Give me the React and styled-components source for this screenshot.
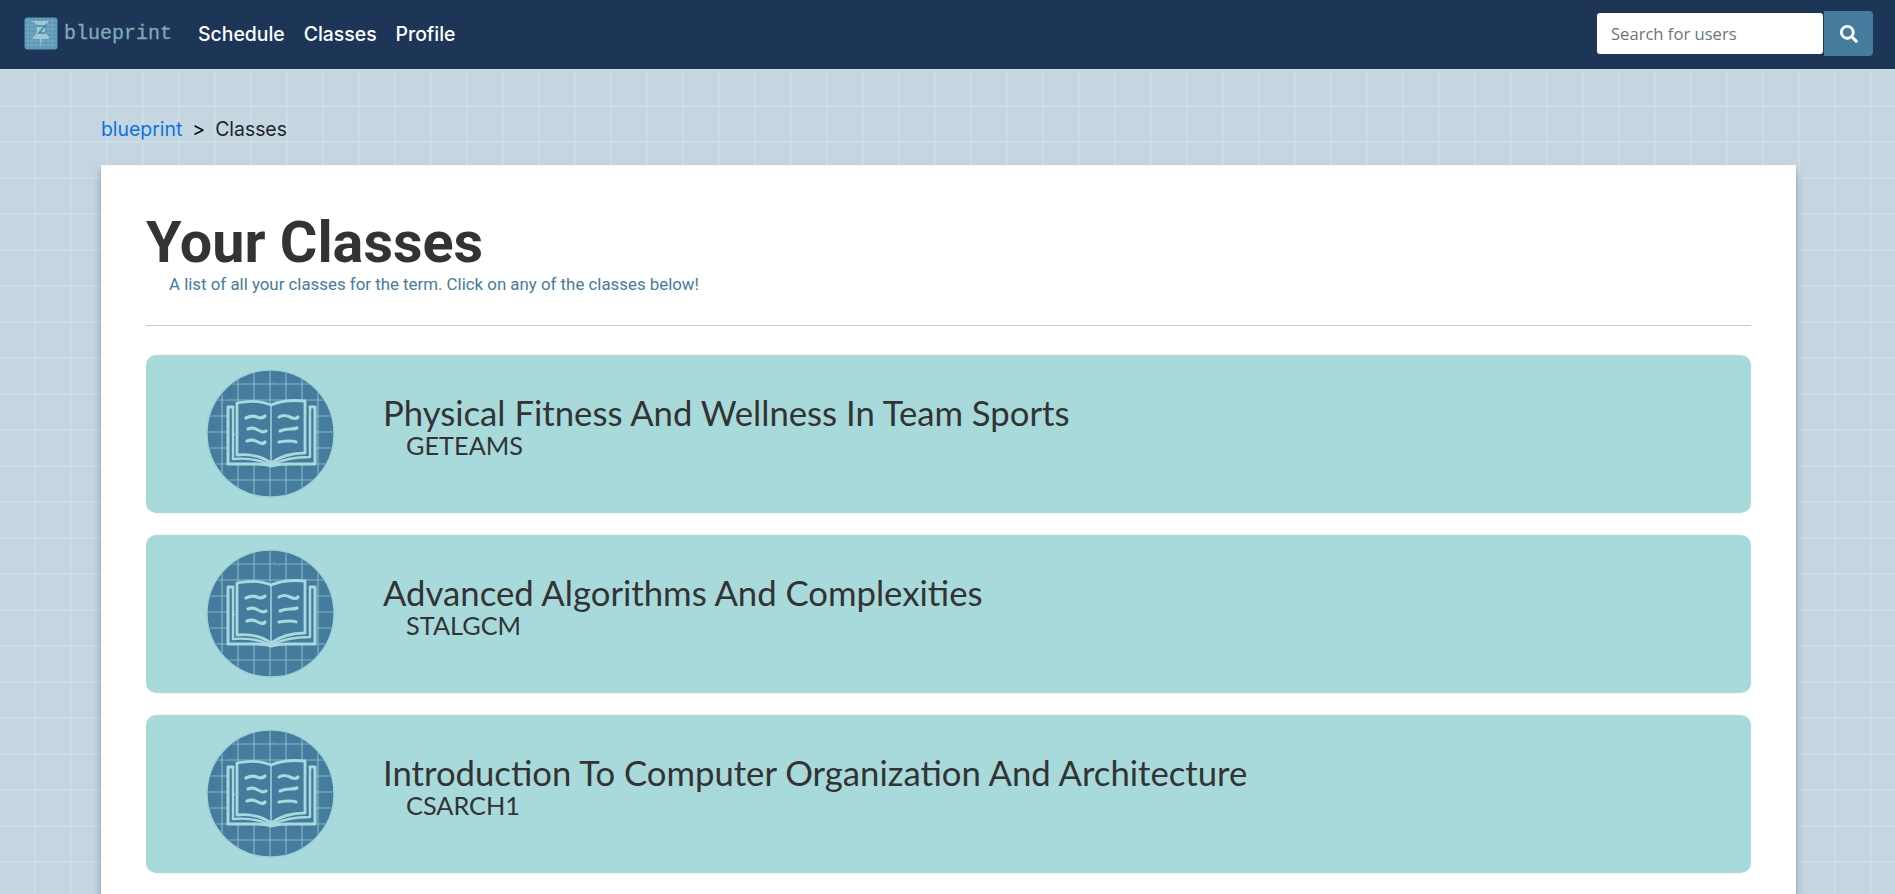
import React from 'react';
import styled, { createGlobalStyle } from 'styled-components';
import { FaSearch } from 'react-icons/fa';

const classes = [
  { title: 'Physical Fitness And Wellness In Team Sports', code: 'GETEAMS' },
  { title: 'Advanced Algorithms And Complexities', code: 'STALGCM' },
  { title: 'Introduction To Computer Organization And Architecture', code: 'CSARCH1' },
];

function LogoMark() {
  const lines = [4, 8, 12, 16, 20, 24, 28];
  return (
    <svg width="34" height="33" viewBox="0 0 34 33">
      <rect x="0.5" y="0.5" width="33" height="32" rx="3" fill="#5b97b5" />
      {lines.map((p) => (
        <g key={p} stroke="#7fb3c6" strokeWidth="0.7">
          <line x1={p} y1="1" x2={p} y2="32" />
          <line x1="1" y1={p} x2="33" y2={p} />
        </g>
      ))}
      <path d="M9 4h15v2l-3 1v9l4 4v2H9v-2l4-4V7l-3-1z" fill="#9cc9d3" />
      <path d="M16 22h2l-1 9z" fill="#9cc9d3" />
      <path d="M13 9h8l-6 7h6" fill="none" stroke="#4d86a3" strokeWidth="1.6" />
    </svg>
  );
}

function BookIcon() {
  const grid = [15, 31, 47, 63, 79, 95, 111];
  return (
    <svg width="129" height="131" viewBox="-1 -1 129 131">
      <defs>
        <clipPath id="disc">
          <circle cx="63.5" cy="64.5" r="62.5" />
        </clipPath>
        <filter id="rough" x="-5%" y="-5%" width="110%" height="110%">
          <feTurbulence type="fractalNoise" baseFrequency="0.2" numOctaves="2" seed="4" />
          <feDisplacementMap in="SourceGraphic" scale="1.5" />
        </filter>
      </defs>
      <g filter="url(#rough)">
        <circle cx="63.5" cy="64.5" r="63.5" fill="#457b9d" stroke="#9bd0d6" strokeWidth="1.4" />
        <g clipPath="url(#disc)" stroke="#86b7c6" strokeWidth="1.2">
          {grid.map((p) => (
            <g key={p}>
              <line x1={p} y1="0" x2={p} y2="129" />
              <line x1="0" y1={p} x2="127" y2={p} />
            </g>
          ))}
        </g>
        <g fill="none" stroke="#a8dadc" strokeLinejoin="round" strokeLinecap="round">
          <path d="M26 38H21V95H49Q58 95 64 97Q71 95 80 95H108V38H103" fill="#457b9d" strokeWidth="3" />
          <path d="M30 34Q50 30 64 36Q78 30 98 32V84Q78 84 64 94Q50 84 30 86Z" fill="#457b9d" strokeWidth="2.8" />
          <path d="M26 38V90Q48 88 64 96Q80 88 103 88V38" strokeWidth="2.4" />
          <path d="M64 36V94" strokeWidth="1.4" />
          <g strokeWidth="3.2">
            <path d="M39 49Q45 46 50 48T58 47" />
            <path d="M41 60Q46 58 51 61T59 62" />
            <path d="M40 72Q46 70 51 73T58 73" />
            <path d="M72 48Q77 45 83 48T91 48" />
            <path d="M73 62Q78 60 83 60T90 59" />
            <path d="M72 73Q77 72 83 72T89 73" />
          </g>
        </g>
      </g>
    </svg>
  );
}

export default function App() {
  return (
    <>
      <GlobalStyle />
      <Page>
        <Navbar>
          <Brand href="#">
            <LogoMark />
            <BrandName>blueprint</BrandName>
          </Brand>
          <NavLinks>
            <NavLink href="#">Schedule</NavLink>
            <NavLink href="#">Classes</NavLink>
            <NavLink href="#">Profile</NavLink>
          </NavLinks>
          <SearchForm>
            <SearchInput placeholder="Search for users" />
            <SearchButton type="button" aria-label="Search">
              <FaSearch size={18} />
            </SearchButton>
          </SearchForm>
        </Navbar>
        <Main>
          <Breadcrumb>
            <CrumbLink href="#">blueprint</CrumbLink>
            <CrumbArrow>&gt;</CrumbArrow>
            <span>Classes</span>
          </Breadcrumb>
          <Card>
            <Heading>Your Classes</Heading>
            <Subheading>A list of all your classes for the term. Click on any of the classes below!</Subheading>
            <Divider />
            <ClassList>
              {classes.map((item) => (
                <ClassRow key={item.code}>
                  <IconSlot>
                    <BookIcon />
                  </IconSlot>
                  <ClassText>
                    <ClassTitle>{item.title}</ClassTitle>
                    <ClassCode>{item.code}</ClassCode>
                  </ClassText>
                </ClassRow>
              ))}
            </ClassList>
          </Card>
        </Main>
      </Page>
    </>
  );
}

const GlobalStyle = createGlobalStyle`
  html, body {
    margin: 0;
    padding: 0;
  }
  * {
    box-sizing: border-box;
  }
  body {
    font-family: Inter, "Liberation Sans", sans-serif;
  }
`;

const Page = styled.div`
  height: 100vh;
  overflow: hidden;
  background-color: #c6d6e0;
  background-image:
    linear-gradient(to right, #cddde8 2px, transparent 2px),
    linear-gradient(to bottom, #cddde8 2px, transparent 2px);
  background-size: 36px 36px;
  background-position: 34px 33px;
`;

const Navbar = styled.nav`
  height: 69px;
  background: #1d3557;
  display: flex;
  align-items: center;
  padding: 0 22px 2px 24px;
`;

const Brand = styled.a`
  display: flex;
  align-items: center;
  gap: 6px;
  text-decoration: none;
`;

const BrandName = styled.span`
  font-family: "Liberation Mono", monospace;
  font-size: 20px;
  color: #7fa9b5;
  -webkit-text-stroke: 0.3px #7fa9b5;
`;

const NavLinks = styled.div`
  display: flex;
  gap: 19px;
  margin-left: 26px;
`;

const NavLink = styled.a`
  color: #fff;
  font-size: 19.4px;
  font-weight: 500;
  text-decoration: none;
`;

const SearchForm = styled.form`
  display: flex;
  align-items: center;
  gap: 1px;
  margin-left: auto;
`;

const SearchInput = styled.input`
  width: 226px;
  height: 41px;
  border: none;
  border-radius: 3px;
  padding: 0 14px;
  font-family: "Open Sans", sans-serif;
  font-size: 16.6px;
  &::placeholder {
    color: #6c757d;
  }
`;

const SearchButton = styled.button`
  width: 49px;
  height: 45px;
  border: none;
  border-radius: 0 4px 4px 0;
  background: #457b9d;
  color: #fff;
  display: flex;
  align-items: center;
  justify-content: center;
`;

const Main = styled.main`
  padding: 48px 99px 0 101px;
`;

const Breadcrumb = styled.div`
  display: flex;
  align-items: center;
  gap: 10px;
  height: 24px;
  font-size: 19.4px;
  color: #212529;
  margin-bottom: 24px;
`;

const CrumbLink = styled.a`
  color: #0a75e0;
  text-decoration: none;
`;

const CrumbArrow = styled.span`
  color: #000;
`;

const Card = styled.section`
  background: #fff;
  padding: 46px 45px 40px;
  box-shadow: 0 6px 8px rgba(70, 100, 140, 0.55);
  min-height: 760px;
`;

const Heading = styled.h1`
  margin: 0;
  font-family: Roboto, sans-serif;
  font-size: 57.5px;
  line-height: 63px;
  font-weight: 700;
  color: #333;
`;

const Subheading = styled.p`
  margin: 0 0 0 23px;
  font-family: Roboto, sans-serif;
  font-size: 16.85px;
  line-height: 20px;
  color: #457b9d;
`;

const Divider = styled.hr`
  border: none;
  border-top: 1px solid #c8c8c8;
  margin: 31px 0 29px;
`;

const ClassList = styled.div`
  display: flex;
  flex-direction: column;
  gap: 22px;
`;

const ClassRow = styled.a`
  height: 158px;
  background: #a8dadc;
  border-radius: 10px;
  display: flex;
  align-items: center;
`;

const IconSlot = styled.div`
  flex: none;
  width: 237px;
  padding-left: 60px;
  margin-top: -2px;
  display: flex;
`;

const ClassText = styled.div`
  display: flex;
  flex-direction: column;
  color: #333;
  font-family: Lato, sans-serif;
  margin-top: -18px;
`;

const ClassTitle = styled.div`
  font-size: 34.7px;
  line-height: 40px;
`;

const ClassCode = styled.div`
  margin-left: 23px;
  font-size: 25.3px;
  line-height: 24px;
`;
